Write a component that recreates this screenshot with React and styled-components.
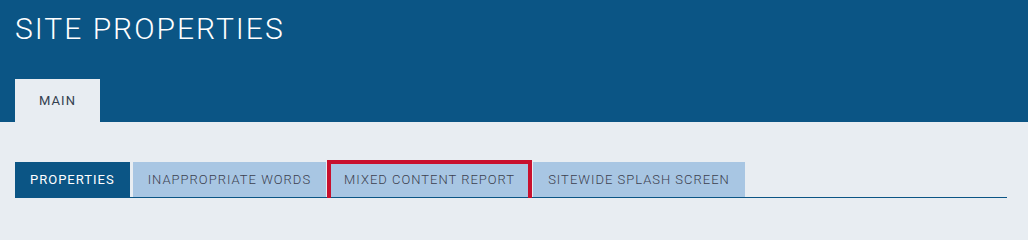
import React from "react";
import styled, { createGlobalStyle } from "styled-components";

const GlobalStyle = createGlobalStyle`
  html, body {
    margin: 0;
    padding: 0;
    background: #e8edf2;
    font-family: Roboto, "Liberation Sans", sans-serif;
  }
`;

const tabs = [
  { label: "PROPERTIES", active: true },
  { label: "INAPPROPRIATE WORDS" },
  { label: "MIXED CONTENT REPORT", highlighted: true },
  { label: "SITEWIDE SPLASH SCREEN" },
];

function App() {
  return (
    <>
      <GlobalStyle />
      <Header>
        <Title>SITE PROPERTIES</Title>
        <MainTabs>
          <MainTab>MAIN</MainTab>
        </MainTabs>
      </Header>
      <Body>
        <SubTabs>
          {tabs.map((t) => (
            <SubTab key={t.label} $active={t.active} $highlighted={t.highlighted}>
              {t.label}
            </SubTab>
          ))}
        </SubTabs>
      </Body>
    </>
  );
}

const Header = styled.header`
  background: #0b5585;
  height: 122px;
  padding: 0 15px;
  box-sizing: border-box;
  display: flex;
  flex-direction: column;
  justify-content: space-between;
`;

const Title = styled.h1`
  margin: 0;
  padding-top: 12px;
  color: #ffffff;
  font-size: 30px;
  font-weight: 300;
  letter-spacing: 2px;
  line-height: 34px;
`;

const MainTabs = styled.nav`
  display: flex;
`;

const MainTab = styled.div`
  width: 85px;
  height: 43px;
  background: #e8edf2;
  color: #34404f;
  font-size: 13px;
  font-weight: 400;
  letter-spacing: 1.1px;
  display: flex;
  align-items: center;
  justify-content: center;
`;

const Body = styled.main`
  padding: 40px 21px 0 15px;
`;

const SubTabs = styled.nav`
  display: flex;
  gap: 3px;
  border-bottom: 1.5px solid #0b5585;
`;

const SubTab = styled.div`
  position: relative;
  height: 35px;
  padding: 0 15px;
  display: flex;
  align-items: center;
  font-size: 13px;
  font-weight: ${(p) => (p.$active ? 400 : 300)};
  letter-spacing: 1px;
  background: ${(p) => (p.$active ? "#0b5585" : "#a8c6e3")};
  color: ${(p) => (p.$active ? "#ffffff" : "#3c4150")};

  ${(p) =>
    p.$highlighted &&
    `
    &::after {
      content: "";
      position: absolute;
      top: -2px;
      bottom: -5px;
      left: -2px;
      right: -2px;
      border: 4px solid #c8102e;
    }
  `}
`;

export default App;
